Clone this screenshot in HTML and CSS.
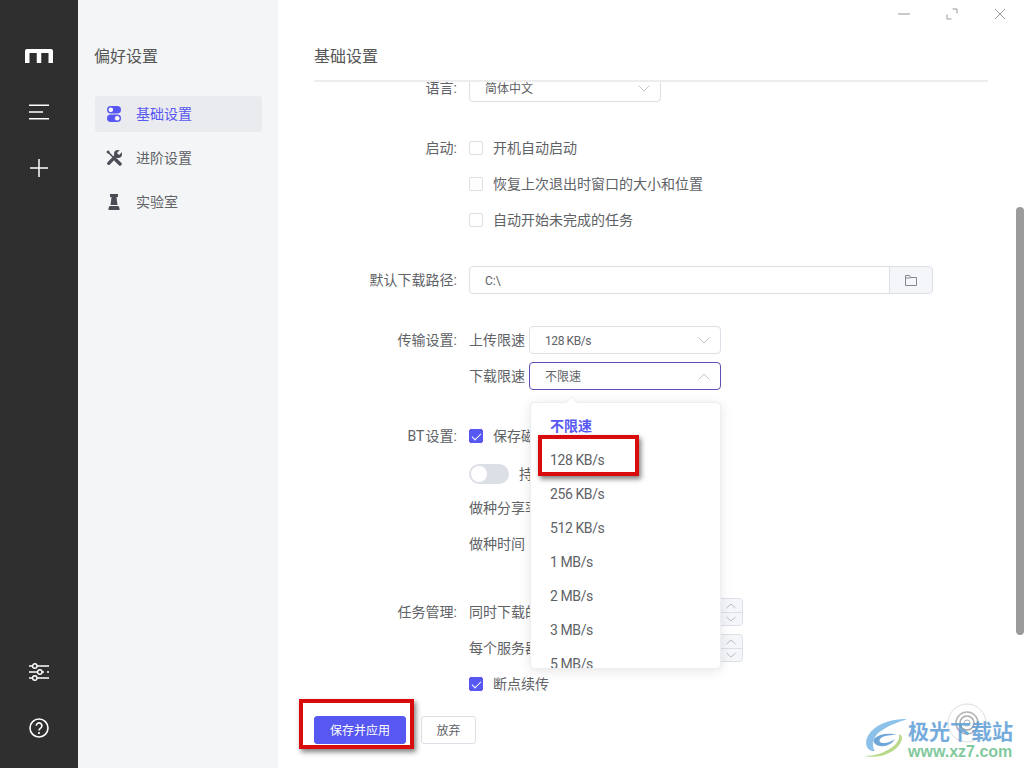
FILE: index.html
```html
<!DOCTYPE html>
<html lang="zh-CN">
<head>
  <meta charset="UTF-8" />
  <meta name="viewport" content="width=device-width, initial-scale=1.0" />
  <title>偏好设置</title>
  <link rel="stylesheet" href="styles.css">
</head>
<body>
  <div class="app">
    <aside class="rail">
      <div class="rail-group">
        <div class="rail-btn">
          <svg width="28" height="14" viewBox="0 0 28 14"><path d="M0 14V2a2 2 0 0 1 2-2h24a2 2 0 0 1 2 2v12h-4.500V4h-7.250v10h-4.500V4H4.500v10z" fill="#fff"/></svg>
        </div>
        <div class="rail-btn">
          <svg width="20" height="16" viewBox="0 0 20 16" stroke="#fff" stroke-width="1.600" fill="none"><path d="M0 1.200h20M0 8h14M0 14.800h20"/></svg>
        </div>
        <div class="rail-btn">
          <svg width="20" height="20" viewBox="0 0 20 20" stroke="#fff" stroke-width="1.500" fill="none"><path d="M1 10h18M10 1v18"/></svg>
        </div>
      </div>
      <div class="rail-group">
        <div class="rail-btn">
          <svg width="20" height="18" viewBox="0 0 20 18" stroke="#fff" stroke-width="1.400" fill="none"><path d="M0 3h3.500M8 3h12M0 9h8.500M13 9h2M18 9h2M0 15h3.500M8 15h12"/><circle cx="5.800" cy="3" r="2.200"/><circle cx="10.800" cy="9" r="2.200"/><circle cx="5.800" cy="15" r="2.200"/></svg>
        </div>
        <div class="rail-btn">
          <svg width="20" height="20" viewBox="0 0 20 20" fill="none"><circle cx="10" cy="10" r="9" stroke="#fff" stroke-width="1.600"/><path d="M7.300 7.800a2.800 2.800 0 1 1 4.300 2.300c-1 .7-1.600 1.200-1.600 2.500" stroke="#fff" stroke-width="1.600"/><circle cx="10" cy="15" r="1.100" fill="#fff"/></svg>
        </div>
      </div>
    </aside>

    <section class="prefs">
      <h1 class="prefs-title">偏好设置</h1>
      <nav class="prefs-nav">
        <a class="nav-item active" href="#">
          <svg width="16" height="16" viewBox="0 0 16 16"><rect x="1" y="0" width="14" height="7.500" rx="3.750" fill="#5757f2"/><rect x="1" y="8.500" width="14" height="7.500" rx="3.750" fill="#5757f2"/><circle cx="4.800" cy="3.750" r="2.300" fill="#fff"/><circle cx="11.200" cy="12.250" r="2.300" fill="#fff"/></svg>
          基础设置
        </a>
        <a class="nav-item" href="#">
          <svg width="16" height="16" viewBox="0 0 16 16" fill="none" stroke="#4a4d55">
            <path d="M1.200 1.200l2 2" stroke-width="2.600"/>
            <path d="M3 3l7 7" stroke-width="1.600"/>
            <path d="M10 10l4 4" stroke-width="3.400" stroke-linecap="round"/>
            <path d="M2.700 13.300l7.300-7.300" stroke-width="3.200" stroke-linecap="round"/>
            <circle cx="12" cy="4" r="4" fill="#4a4d55" stroke="none"/>
            <path d="M12 4l4-4" stroke="#f4f5f7" stroke-width="3"/>
          </svg>
          进阶设置
        </a>
        <a class="nav-item" href="#">
          <svg width="16" height="16" viewBox="0 0 16 16" fill="#4a4d55"><path d="M4 0h8v3h-1.500l1 8h-7l1-8H4zM3.500 12h9l1 2v2h-11v-2z"/></svg>
          实验室
        </a>
      </nav>
    </section>

    <main class="main">
      <div class="titlebar">
        <svg width="12" height="12" viewBox="0 0 12 12" stroke="#b4b4b4" stroke-width="1.400" fill="none"><path d="M0 6h12"/></svg>
        <svg width="12" height="12" viewBox="0 0 12 12" stroke="#999" stroke-width="1" fill="none"><path d="M1 6.500v4.500h4.500M6.500 1H11v4.500"/></svg>
        <svg width="12" height="12" viewBox="0 0 12 12" stroke="#999" stroke-width="1" fill="none"><path d="M1 1l10 10M11 1L1 11"/></svg>
      </div>
      <header class="head">基础设置</header>

      <div class="form">
        <div class="form-inner">
          <div class="section">
            <div class="label">语言:</div>
            <div class="rows">
              <div class="row">
                <div class="select">
                  <span class="value">简体中文</span>
                  <svg class="chev" width="12" height="7" viewBox="0 0 12 7"><path d="M.5.500L6 6 11.500.500" fill="none" stroke="#c0c4cc"/></svg>
                </div>
              </div>
            </div>
          </div>

          <div class="section">
            <div class="label">启动:</div>
            <div class="rows">
              <div class="row"><i class="check"></i>开机自动启动</div>
              <div class="row"><i class="check"></i>恢复上次退出时窗口的大小和位置</div>
              <div class="row"><i class="check"></i>自动开始未完成的任务</div>
            </div>
          </div>

          <div class="section">
            <div class="label">默认下载路径:</div>
            <div class="rows">
              <div class="row">
                <div class="path">
                  <span class="path-value">C:\</span>
                  <span class="path-btn">
                    <svg width="12" height="11" viewBox="0 0 12 11" fill="none" stroke="#85888f"><path d="M.5 10.500V.5h4l1 2h6v8zM.5 3h5"/></svg>
                  </span>
                </div>
              </div>
            </div>
          </div>

          <div class="section">
            <div class="label">传输设置:</div>
            <div class="rows">
              <div class="row">
                <span class="inline-label">上传限速</span>
                <div class="select">
                  <span class="value rate">128 KB/s</span>
                  <svg class="chev" width="12" height="7" viewBox="0 0 12 7"><path d="M.5.500L6 6 11.500.500" fill="none" stroke="#c0c4cc"/></svg>
                </div>
              </div>
              <div class="row">
                <span class="inline-label">下载限速</span>
                <div class="select open">
                  <span class="value">不限速</span>
                  <svg class="chev" width="12" height="7" viewBox="0 0 12 7"><path d="M.5 6.500L6 1l5.500 5.500" fill="none" stroke="#c0c4cc"/></svg>
                  <div class="dropdown">
                    <i class="dropdown-arrow"></i>
                    <ul class="options">
                      <li class="selected">不限速</li>
                      <li>128 KB/s</li>
                      <li>256 KB/s</li>
                      <li>512 KB/s</li>
                      <li>1 MB/s</li>
                      <li>2 MB/s</li>
                      <li>3 MB/s</li>
                      <li>5 MB/s</li>
                    </ul>
                  </div>
                </div>
              </div>
            </div>
          </div>

          <div class="section section-bt">
            <div class="label">BT 设置:</div>
            <div class="rows">
              <div class="row"><i class="check on"></i>保存磁力链接为种子文件</div>
              <div class="row row-toggle"><i class="toggle"></i>持续做种</div>
              <div class="row">做种分享率</div>
              <div class="row">做种时间</div>
            </div>
          </div>

          <div class="section">
            <div class="label">任务管理:</div>
            <div class="rows">
              <div class="row row-num">
                同时下载的任务数
                <div class="stepper">
                  <svg width="10" height="6" viewBox="0 0 10 6"><path d="M.5 5L5 1l4.500 4" fill="none" stroke="#b8bbc2"/></svg>
                  <svg width="10" height="6" viewBox="0 0 10 6"><path d="M.5 1L5 5l4.500-4" fill="none" stroke="#b8bbc2"/></svg>
                </div>
              </div>
              <div class="row row-num">
                每个服务器最大连接数
                <div class="stepper">
                  <svg width="10" height="6" viewBox="0 0 10 6"><path d="M.5 5L5 1l4.500 4" fill="none" stroke="#b8bbc2"/></svg>
                  <svg width="10" height="6" viewBox="0 0 10 6"><path d="M.5 1L5 5l4.500-4" fill="none" stroke="#b8bbc2"/></svg>
                </div>
              </div>
              <div class="row"><i class="check on"></i>断点续传</div>
            </div>
          </div>
        </div>
      </div>

      <footer class="actions">
        <button class="btn btn-primary" type="button">保存并应用</button>
        <button class="btn" type="button">放弃</button>
      </footer>
    </main>

    <div class="scrollbar"></div>

    <div class="mark mark-option"></div>
    <div class="mark mark-save"></div>

    <div class="watermark">
      <svg class="wm-rings" width="40" height="40" viewBox="0 0 40 40" fill="none">
        <circle cx="20" cy="20" r="19" stroke="#dcdcdc"/>
        <circle cx="20" cy="20" r="11" stroke="#b4b4b4" stroke-width="1.500"/>
        <circle cx="20" cy="20" r="7" stroke="#a8a8a8" stroke-width="1.500"/>
        <circle cx="20" cy="20" r="3" stroke="#b4b4b4"/>
      </svg>
      <svg class="wm-logo" width="42" height="40" viewBox="0 0 42 40">
        <path d="M42 1C26 1 8 6 2 20c-3 8 2 14 8 13C6 28 8 18 16 13 24 7 34 4 42 1z" fill="#8cc2ea"/>
        <path d="M10 20c6-5 15-5 22-3-6 0-12 0-16 3-3 3-1 5 3 5 4 0 8-2 11-4-3 5-9 8-15 7-6-1-8-5-5-8z" fill="#6ea6d8"/>
        <path d="M0 38c12 3 30-2 36-14 2-4 1-7-2-8 1 5-2 10-8 14-7 5-17 8-26 8z" fill="#b8d98a"/>
      </svg>
      <div class="wm-text">
        <div class="wm-name">极光下载站</div>
        <div class="wm-url">www.xz7.com</div>
      </div>
    </div>
  </div>
</body>
</html>
```

FILE: styles.css
```css
* {
  box-sizing: border-box;
}
html, body {
  margin: 0;
  height: 100%;
  overflow: hidden;
}
body {
  font-family: Roboto, "Noto Sans CJK SC", sans-serif;
  font-size: 14px;
  color: #606266;
  background: #fff;
}
.app {
  position: relative;
  display: flex;
  width: 1024px;
  height: 768px;
  overflow: hidden;
}

/* dark rail */
.rail {
  width: 78px;
  flex: none;
  background: #2f2f2f;
  padding: 28px 0 12px;
  display: flex;
  flex-direction: column;
  justify-content: space-between;
}
.rail-btn {
  height: 56px;
  display: flex;
  align-items: center;
  justify-content: center;
}

/* preferences panel */
.prefs {
  width: 200px;
  flex: none;
  background: #f4f5f7;
  padding: 43px 16px 0 17px;
}
.prefs-title {
  margin: 0 0 25px -1px;
  font-size: 16px;
  font-weight: 400;
  line-height: 28px;
  color: #555;
}
.prefs-nav {
  display: flex;
  flex-direction: column;
  gap: 8px;
}
.nav-item {
  height: 36px;
  padding-left: 11px;
  display: flex;
  align-items: center;
  gap: 14px;
  border-radius: 4px;
  line-height: 34px;
  color: #606266;
  text-decoration: none;
}
.nav-item.active {
  background: #eaebef;
  color: #5757f2;
}

/* main column */
.main {
  flex: 1;
  min-width: 0;
  display: flex;
  flex-direction: column;
}
.titlebar {
  height: 28px;
  padding-right: 18px;
  display: flex;
  justify-content: flex-end;
  align-items: center;
  gap: 36px;
}
.head {
  height: 54px;
  margin: 0 36px;
  border-bottom: 2px solid #ededed;
  font-size: 16px;
  line-height: 58px;
  color: #555;
}
.form {
  flex: 1;
  min-height: 0;
  overflow: hidden;
  margin-left: 36px;
}
.form-inner {
  width: 619px;
  margin-top: -12px;
  display: flex;
  flex-direction: column;
  gap: 24px;
}
.section {
  display: grid;
  grid-template-columns: 143px 1fr;
  column-gap: 12px;
}
.section-bt {
  margin-bottom: 8px;
}
.section-bt .label {
  word-spacing: -2px;
}
.label {
  height: 36px;
  line-height: 36px;
  text-align: right;
}
.row {
  height: 36px;
  line-height: 34px;
  display: flex;
  align-items: center;
}
.row-toggle {
  padding-top: 4px;
  line-height: 30px;
}
.row-num {
  width: 274px;
  justify-content: space-between;
}

/* controls */
.select {
  position: relative;
  width: 192px;
  height: 28px;
  padding: 0 10px 0 15px;
  display: flex;
  align-items: center;
  justify-content: space-between;
  border: 1px solid #dcdfe6;
  border-radius: 4px;
  font-size: 12px;
}
.select.open {
  border-color: #5a50b8;
}
.select .value {
  line-height: 16px;
  padding-top: 2px;
}
.select .rate {
  letter-spacing: -0.4px;
}
.inline-label {
  width: 60px;
  flex: none;
}
.check {
  width: 14px;
  height: 14px;
  margin-right: 10px;
  flex: none;
  border: 1px solid #dcdfe6;
  border-radius: 2px;
  background: #fff;
  position: relative;
}
.check.on {
  background: #5757f2;
  border-color: #5757f2;
}
.check.on::after {
  content: "";
  position: absolute;
  left: 4px;
  top: 1px;
  width: 4px;
  height: 8px;
  border: solid #fff;
  border-width: 0 1px 1px 0;
  transform: rotate(45deg);
}
.toggle {
  width: 40px;
  height: 20px;
  margin-right: 10px;
  flex: none;
  border-radius: 10px;
  background: #dcdfe6;
  position: relative;
}
.toggle::after {
  content: "";
  position: absolute;
  left: 2px;
  top: 2px;
  width: 16px;
  height: 16px;
  border-radius: 50%;
  background: #fff;
}
.path {
  width: 464px;
  height: 28px;
  display: flex;
  border: 1px solid #dcdfe6;
  border-radius: 4px;
  font-size: 12px;
}
.path-value {
  flex: 1;
  padding-left: 15px;
  line-height: 28px;
}
.path-btn {
  width: 43px;
  display: flex;
  align-items: center;
  justify-content: center;
  background: #f5f6fa;
  border-left: 1px solid #dcdfe6;
  border-radius: 0 3px 3px 0;
}
.stepper {
  width: 32px;
  height: 28px;
  padding-right: 2px;
  display: flex;
  flex-direction: column;
  align-items: flex-end;
  justify-content: space-around;
  border: 1px solid #dcdfe6;
  border-radius: 0 4px 4px 0;
  background: linear-gradient(#f5f6fa 13px, #dcdfe6 13px, #dcdfe6 14px, #f5f6fa 14px);
}
.stepper svg {
  margin-right: 4px;
}

/* open select menu */
.dropdown {
  position: absolute;
  left: 0;
  top: 39px;
  width: 191px;
  height: 267px;
  z-index: 5;
  background: #fff;
  border: 1px solid #eceef2;
  border-radius: 4px;
  box-shadow: 0 2px 12px rgba(0, 0, 0, 0.1);
}
.dropdown-arrow {
  position: absolute;
  left: 36px;
  top: -5px;
  width: 9px;
  height: 9px;
  background: #fff;
  border: solid #eceef2;
  border-width: 1px 0 0 1px;
  transform: rotate(45deg);
}
.options {
  position: relative;
  list-style: none;
  margin: 0;
  padding: 6px 0 0;
  height: 100%;
  overflow: hidden;
  font-size: 14px;
}
.options li {
  height: 34px;
  line-height: 35px;
  padding-left: 19px;
  letter-spacing: -0.4px;
}
.options .selected {
  color: #5757f2;
  font-weight: 700;
  line-height: 34px;
  letter-spacing: 0;
}

/* buttons */
.actions {
  height: 68px;
  flex: none;
  padding: 16px 0 0 36px;
  display: flex;
  align-items: flex-start;
  gap: 15px;
}
.btn {
  width: 55px;
  height: 28px;
  padding: 0 0 2px;
  border: 1px solid #dcdfe6;
  border-radius: 3px;
  background: #fff;
  font-family: inherit;
  font-size: 12px;
  color: #606266;
}
.btn-primary {
  width: 92px;
  border-color: #5757f2;
  background: #5757f2;
  color: #fff;
}

/* things on top of the window */
.scrollbar {
  position: absolute;
  right: 0;
  top: 207px;
  width: 8px;
  height: 428px;
  border-radius: 4px;
  background: #9b9b9b;
}
.mark {
  position: absolute;
  border: 4px solid #d80c0c;
  box-shadow: 2px 3px 5px rgba(0, 0, 0, 0.5);
  z-index: 6;
}
.mark-option {
  left: 538px;
  top: 435px;
  width: 101px;
  height: 41px;
}
.mark-save {
  left: 299px;
  top: 699px;
  width: 115px;
  height: 50px;
}
.watermark {
  position: absolute;
  left: 865px;
  top: 718px;
  display: flex;
  gap: 1px;
}
.wm-rings {
  position: absolute;
  left: 82px;
  top: -15px;
}
.wm-logo {
  flex: none;
}
.wm-text {
  position: relative;
  opacity: 0.85;
}
.wm-name {
  font-family: "Noto Sans CJK SC", sans-serif;
  font-size: 21px;
  font-weight: 700;
  line-height: 24px;
  color: #5d9ed6;
}
.wm-url {
  font-family: "Liberation Sans", sans-serif;
  font-size: 16px;
  font-weight: 700;
  line-height: 19px;
  color: #6dbf8c;
}
```
